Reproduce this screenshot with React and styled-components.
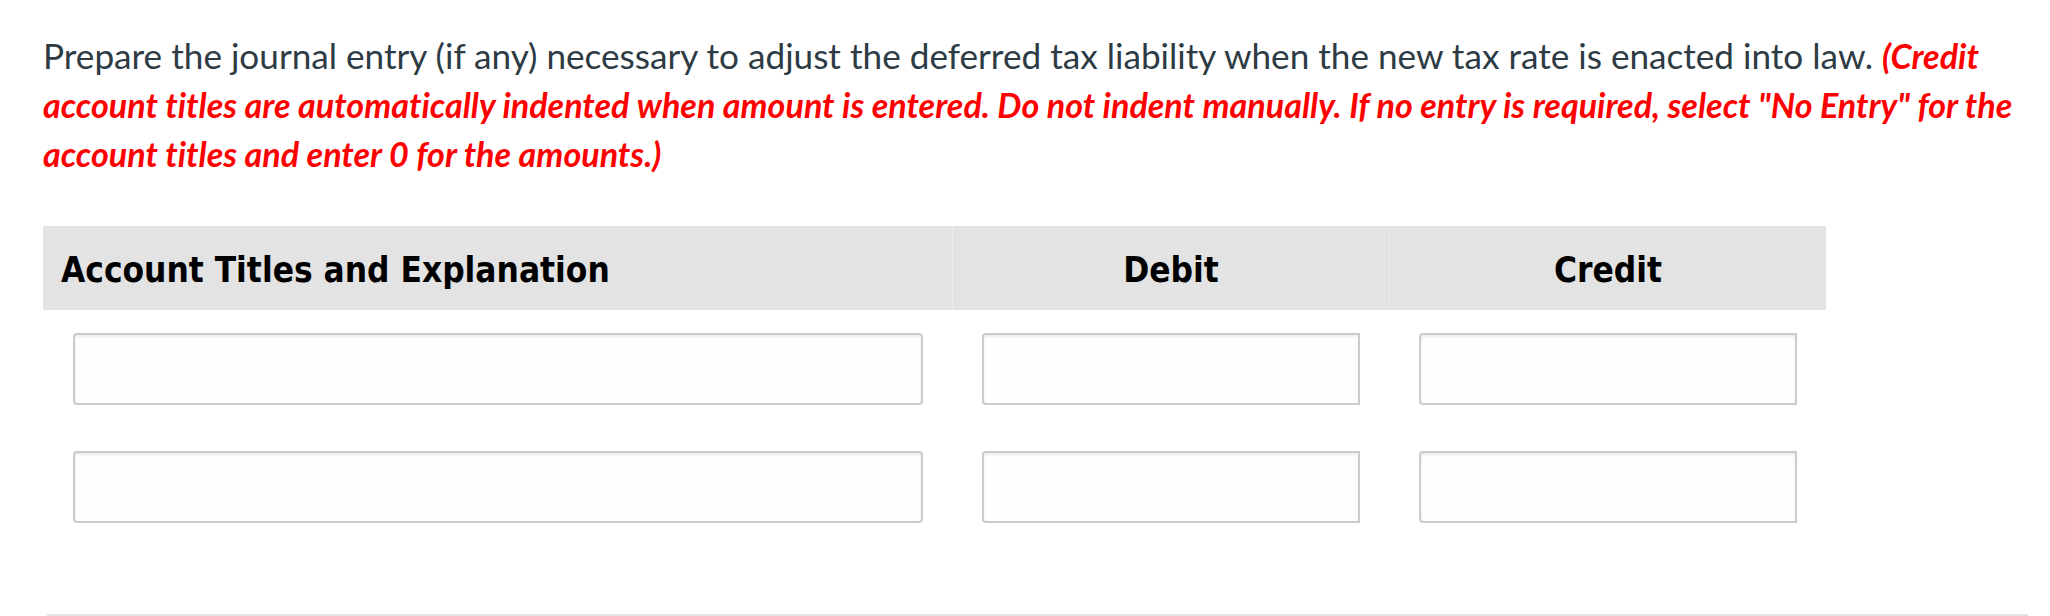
import React from "react";
import styled, { createGlobalStyle } from "styled-components";

const Global = createGlobalStyle`
  html, body { margin: 0; padding: 0; background: #ffffff; }
  body { width: 2050px; height: 616px; overflow: hidden; }
`;

const Page = styled.div`
  padding: 31px 18px 0 43px;
`;

const Prompt = styled.p`
  margin: 0;
  font-family: Lato, "Open Sans", sans-serif;
  font-size: 35.15px;
  line-height: 49px;
  color: #2d3b45;
  font-variant-ligatures: no-common-ligatures;
`;

const Note = styled.span`
  color: #ff0000;
  font-weight: 700;
  font-style: italic;
  font-size: 34.1px;
`;

const Table = styled.div`
  margin-top: 48px;
  width: 1783px;
  display: grid;
  grid-template-columns: 909px 437px 437px;
`;

const HeadCell = styled.div`
  height: 84px;
  box-sizing: border-box;
  padding: 4px 18px 0;
  display: flex;
  align-items: center;
  justify-content: ${(p) => (p.$center ? "center" : "flex-start")};
  background: #e3e3e3;
  border-left: ${(p) => (p.$divider ? "1px solid #ebebeb" : "none")};
  font-family: "DejaVu Sans Condensed", "DejaVu Sans", sans-serif;
  font-stretch: condensed;
  font-weight: 700;
  font-size: 34.9px;
  color: #000000;
`;

const Cell = styled.div`
  padding: 23px 29px 23px 30px;
`;

const Field = styled.div`
  height: 72px;
  box-sizing: border-box;
  border: 2px solid #cbcbcb;
  border-radius: ${(p) => (p.$numeric ? "4px 0 0 4px" : "4px")};
  background: #fefefe;
  box-shadow: inset 0 2px 3px rgba(0, 0, 0, 0.07);
`;

const Divider = styled.div`
  margin: 68px 0 0 4px;
  width: 1981px;
  height: 2px;
  background: #e2e2e2;
`;

const rows = [0, 1];

export default function App() {
  return (
    <>
      <Global />
      <Page>
        <Prompt>
          Prepare the journal entry (if any) necessary to adjust the deferred tax liability when the new tax rate is
          enacted into law.{" "}
          <Note>
            (Credit account titles are automatically indented when amount is entered. Do not indent manually. If no
            entry is required, select "No Entry" for the account titles and enter 0 for the amounts.)
          </Note>
        </Prompt>
        <Table>
          <HeadCell>Account Titles and Explanation</HeadCell>
          <HeadCell $center $divider>Debit</HeadCell>
          <HeadCell $center $divider>Credit</HeadCell>
          {rows.map((r) => (
            <React.Fragment key={r}>
              <Cell>
                <Field />
              </Cell>
              <Cell>
                <Field $numeric />
              </Cell>
              <Cell>
                <Field $numeric />
              </Cell>
            </React.Fragment>
          ))}
        </Table>
        <Divider />
      </Page>
    </>
  );
}
